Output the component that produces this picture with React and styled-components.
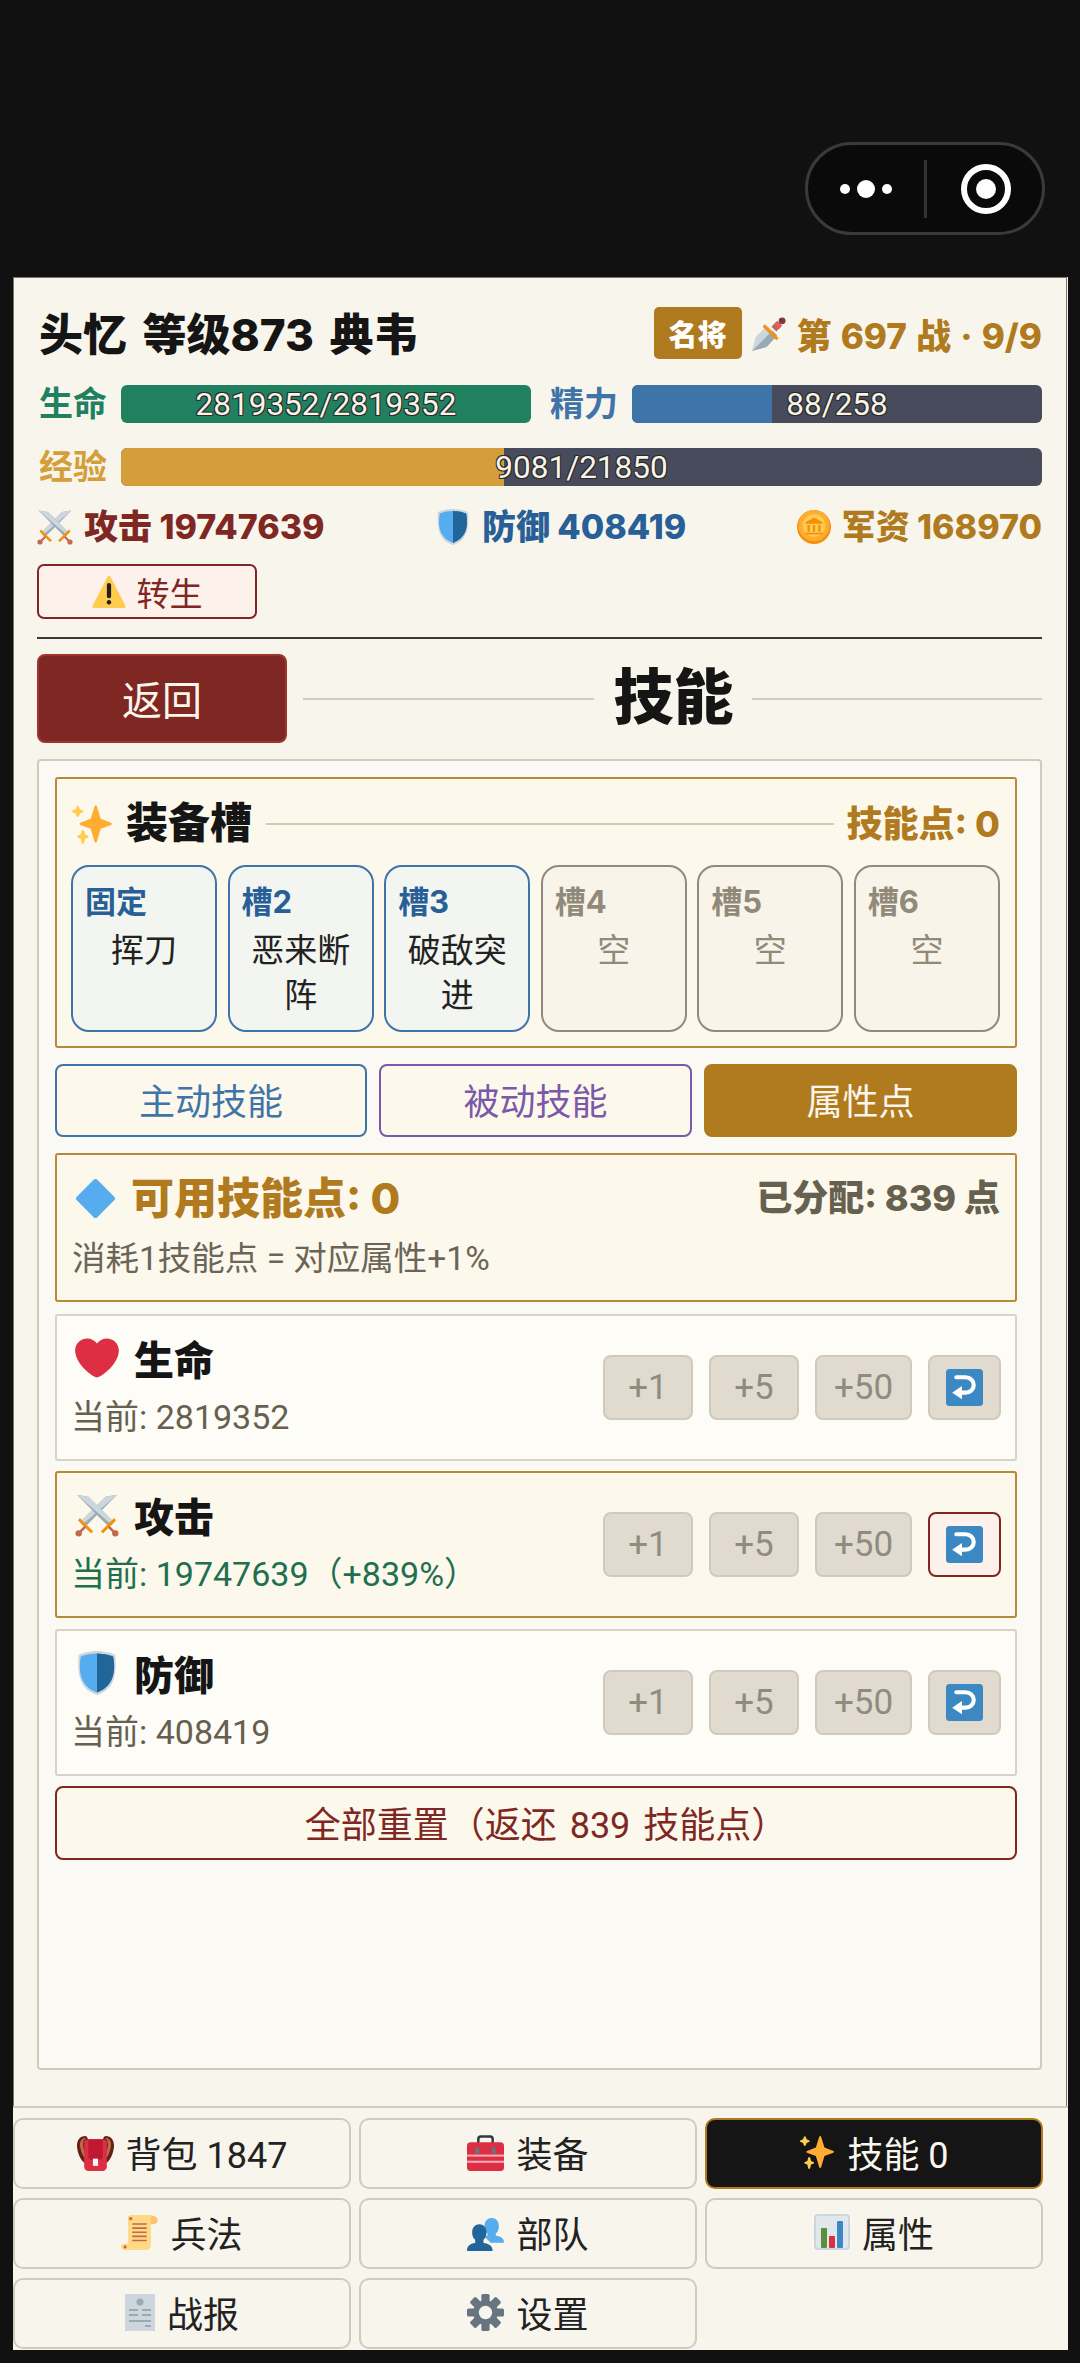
import React from "react";
import styled, { createGlobalStyle } from "styled-components";

const FONT = `Roboto, "Noto Sans CJK SC", sans-serif`;
const BOLD_FONT = `Inter, "Noto Sans CJK SC", sans-serif`;
const GOLD = "#b07a1e";
const RED = "#7f2723";
const BLUE = "#3f74a8";
const DEEP_BLUE = "#275f96";
const GREEN = "#20805f";
const LINE = "#cfcbbd";

const GlobalStyle = createGlobalStyle`
  html, body { margin: 0; padding: 0; background: #111; }
  * { box-sizing: border-box; }
  body { font-family: ${FONT}; }
`;

const Screen = styled.div`
  width: 1080px;
  height: 2363px;
  background: #111;
  overflow: hidden;
`;

// wechat style title bar
const TopBar = styled.div`
  height: 277px;
  padding: 142px 35px 0 0;
  display: flex;
  justify-content: flex-end;
`;
const Capsule = styled.div`
  width: 240px;
  height: 93px;
  border: 3px solid #3a3a3a;
  border-radius: 47px;
  background: #0a0a0a;
  display: flex;
  align-items: center;
`;
const CapsulePart = styled.div`
  flex: 1;
  display: flex;
  align-items: center;
  justify-content: center;
  gap: 7px;
`;
const Dot = styled.span`
  width: ${(p) => (p.$big ? 18 : 10)}px;
  height: ${(p) => (p.$big ? 18 : 10)}px;
  border-radius: 50%;
  background: #fff;
`;
const CapsuleDivider = styled.div`
  width: 3px;
  height: 58px;
  background: #333;
`;
const Record = styled.div`
  width: 50px;
  height: 50px;
  margin-left: 3px;
  border: 6px solid #fff;
  border-radius: 50%;
  display: flex;
  align-items: center;
  justify-content: center;
  &::after {
    content: "";
    width: 20px;
    height: 20px;
    border-radius: 50%;
    background: #fff;
  }
`;

const Panel = styled.div`
  margin-left: 13px;
  width: 1055px;
  height: 2073px;
  background: #f8f5ec;
  overflow: hidden;
  display: flex;
  flex-direction: column;
`;
const Main = styled.div`
  width: 1054px;
  height: 1830px;
  flex: none;
  padding: 30px 24px 0 23px;
  border-left: 1px solid #77756a;
  border-right: 1px solid #77756a;
  border-top: 1px solid #77756a;
`;

const HeadRow = styled.div`
  height: 52px;
  margin-top: -1px;
  display: flex;
  align-items: center;
`;
const PlayerName = styled.div`
  flex: 1;
  padding: 0 0 3px 2px;
  font-family: ${BOLD_FONT};
  font-size: 44px;
  font-weight: 800;
  word-spacing: 6px;
  color: #151515;
  white-space: nowrap;
`;
const RankBadge = styled.div`
  width: 88px;
  height: 52px;
  border-radius: 5px;
  background: ${GOLD};
  color: #fff;
  font-size: 29px;
  font-weight: 900;
  display: flex;
  align-items: center;
  justify-content: center;
`;
const BattleText = styled.div`
  margin-left: 10px;
  display: flex;
  align-items: center;
  gap: 10px;
  font-family: ${BOLD_FONT};
  font-size: 35px;
  font-weight: 800;
  word-spacing: 1.5px;
  color: ${GOLD};
  white-space: pre;
`;

const BarRow = styled.div`
  margin-top: ${(p) => p.$top}px;
  display: flex;
  gap: 17px;
`;
const BarGroup = styled.div`
  flex: 1;
  display: flex;
  align-items: center;
  gap: 12px;
`;
const BarLabel = styled.span`
  flex: none;
  width: 72px;
  padding-left: 2px;
  font-size: 34px;
  line-height: 38px;
  font-weight: 700;
  color: ${(p) => p.$color};
  white-space: nowrap;
`;
const Track = styled.div`
  position: relative;
  flex: 1;
  height: 38px;
  border-radius: 6px;
  background: #474b5b;
  overflow: hidden;
`;
const Fill = styled.div`
  height: 100%;
  background: ${(p) => p.$color};
`;
const BarText = styled.div`
  position: absolute;
  inset: 0;
  display: flex;
  align-items: center;
  justify-content: center;
  font-size: 31.5px;
  color: #f8f4e8;
  text-shadow: -1px -1px 0 #2a2a2a, 1px -1px 0 #2a2a2a, -1px 1px 0 #2a2a2a, 1px 1px 0 #2a2a2a;
`;

const StatRow = styled.div`
  margin-top: 21px;
  height: 40px;
  display: flex;
  align-items: center;
  justify-content: space-between;
`;
const Stat = styled.div`
  display: flex;
  align-items: center;
  gap: 11px;
  font-family: ${BOLD_FONT};
  font-size: 34px;
  line-height: 40px;
  font-weight: 800;
  color: ${(p) => p.$color};
  white-space: nowrap;
`;
const RebirthButton = styled.div`
  margin-top: 17px;
  width: 220px;
  height: 55px;
  border: 2px solid ${RED};
  border-radius: 7px;
  background: #fdf1eb;
  color: ${RED};
  font-size: 33px;
  display: flex;
  align-items: center;
  justify-content: center;
  gap: 11px;
`;
const Divider = styled.div`
  margin-top: 18px;
  height: 2px;
  background: #3b3a2c;
`;

const TitleRow = styled.div`
  margin-top: 15px;
  display: flex;
  align-items: center;
`;
const BackButton = styled.div`
  flex: none;
  width: 250px;
  height: 89px;
  margin-right: 16px;
  padding-bottom: 2px;
  border: 2px solid #a0352f;
  border-radius: 8px;
  background: ${RED};
  color: #fbf5ea;
  font-size: 40px;
  display: flex;
  align-items: center;
  justify-content: center;
`;
const TitleLine = styled.div`
  flex: 1;
  height: 2px;
  background: ${LINE};
`;
const PageTitle = styled.div`
  margin: 0 18px 0 20px;
  font-size: 60px;
  font-weight: 900;
  color: #151515;
  line-height: 1;
`;

const Box = styled.div`
  margin-top: 16px;
  height: 1311px;
  padding: 16px 23px 0 16px;
  border: 2px solid ${LINE};
  border-radius: 4px;
  background: #fbf9f3;
  display: flex;
  flex-direction: column;
  gap: 16px;
`;
const SlotSection = styled.div`
  height: 271px;
  flex: none;
  padding: 23px 15px 0 14px;
  border: 2px solid #b58a3a;
  border-radius: 3px;
  background: #fdf8ec;
`;
const SlotHead = styled.div`
  height: 44px;
  display: flex;
  align-items: center;
`;
const SlotTitle = styled.div`
  margin-left: 13px;
  font-size: 42px;
  line-height: 44px;
  font-weight: 900;
  color: #151515;
`;
const SlotLine = styled.div`
  flex: 1;
  height: 2px;
  margin: 0 13px 0 14px;
  background: #d0c9b4;
`;
const SlotPoints = styled.div`
  font-family: ${BOLD_FONT};
  font-size: 36px;
  line-height: 44px;
  font-weight: 800;
  color: ${GOLD};
  white-space: nowrap;
`;
const SlotGrid = styled.div`
  margin-top: 19px;
  display: grid;
  grid-template-columns: repeat(6, 1fr);
  column-gap: 10.4px;
`;
const Slot = styled.div`
  height: 167px;
  padding: 15px 12px 0;
  border: 2px solid ${(p) => (p.$empty ? "#918a7b" : BLUE)};
  border-radius: 18px;
  background: ${(p) => (p.$empty ? "#f8f4ea" : "#f3f5f0")};
`;
const SlotLabel = styled.div`
  font-family: ${BOLD_FONT};
  font-size: 31px;
  line-height: 40px;
  font-weight: 700;
  color: ${(p) => (p.$empty ? "#918a7b" : DEEP_BLUE)};
`;
const SlotName = styled.div`
  margin-top: 6px;
  font-size: 33px;
  line-height: 45px;
  text-align: center;
  color: ${(p) => (p.$empty ? "#918a7b" : "#222")};
`;

const TabRow = styled.div`
  display: grid;
  grid-template-columns: 312px 313px 1fr;
  gap: 12px;
`;
const Tab = styled.div`
  height: 73px;
  padding-bottom: 3px;
  border: 2px solid ${(p) => p.$color};
  border-radius: 8px;
  background: ${(p) => (p.$active ? p.$color : "#fdf8ec")};
  color: ${(p) => (p.$active ? "#fbf5ea" : p.$color)};
  font-size: 36px;
  display: flex;
  align-items: center;
  justify-content: center;
`;

const Stack = styled.div`
  display: flex;
  flex-direction: column;
  gap: 10.5px;
`;
const PointsCard = styled.div`
  height: 149px;
  margin-bottom: 1px;
  padding: 18px 15px 0 18px;
  border: 2px solid #b58a3a;
  border-radius: 3px;
  background: #fdf8ec;
`;
const PointsHead = styled.div`
  height: 50px;
  display: flex;
  align-items: center;
`;
const PointsMain = styled.div`
  flex: 1;
  margin-left: 15px;
  font-family: ${BOLD_FONT};
  font-size: 43px;
  line-height: 50px;
  font-weight: 800;
  color: ${GOLD};
`;
const PointsUsed = styled.div`
  font-family: ${BOLD_FONT};
  font-size: 36px;
  line-height: 50px;
  font-weight: 800;
  color: #66604f;
  white-space: pre;
`;
const PointsNote = styled.div`
  margin: 14px 0 0 -3px;
  font-size: 33.5px;
  line-height: 44px;
  color: #6b6557;
`;

const AttrRow = styled.div`
  height: 147px;
  padding: 0 14px 0 16px;
  border: 2px solid ${(p) => (p.$active ? "#b58a3a" : "#d7d3c6")};
  border-radius: 3px;
  background: ${(p) => (p.$active ? "#fdf8ec" : "#fdfcf7")};
  display: flex;
  align-items: center;
`;
const AttrInfo = styled.div`
  flex: 1;
`;
const AttrName = styled.div`
  height: 44px;
  display: flex;
  align-items: center;
  gap: 15px;
  padding-left: 2px;
  font-size: 40px;
  font-weight: 900;
  color: #151515;
`;
const AttrValue = styled.div`
  margin: 15px 0 0 -2px;
  font-size: 34px;
  line-height: 44px;
  color: ${(p) => (p.$active ? "#20704f" : "#66604f")};
  white-space: nowrap;
`;
const StepGroup = styled.div`
  display: flex;
  gap: 16px;
`;
const StepButton = styled.div`
  width: ${(p) => p.$width}px;
  height: 65px;
  border: 2px solid #cfcabb;
  border-radius: 8px;
  background: #e0dbce;
  color: #8f8b7e;
  font-size: 35px;
  display: flex;
  align-items: center;
  justify-content: center;
`;
const UndoButton = styled(StepButton)`
  border-color: ${(p) => (p.$active ? RED : "#cfcabb")};
  background: ${(p) => (p.$active ? "#fdf1eb" : "#e0dbce")};
`;
const ResetAll = styled.div`
  height: 74px;
  padding: 0 0 3px 20px;
  border: 2px solid ${RED};
  border-radius: 8px;
  background: #fdf8ec;
  color: ${RED};
  font-size: 36px;
  word-spacing: 4px;
  display: flex;
  align-items: center;
  justify-content: center;
`;

const Nav = styled.div`
  flex: 1;
  padding: 10px 25px 0 0;
  border-top: 2px solid ${LINE};
  margin-top: -1px;
  display: grid;
  grid-template-columns: repeat(3, 1fr);
  grid-auto-rows: 71px;
  gap: 9px 8px;
`;
const NavButton = styled.div`
  padding-bottom: 3px;
  border: 2px solid ${(p) => (p.$active ? GOLD : LINE)};
  border-radius: 10px;
  background: ${(p) => (p.$active ? "#151515" : "#f8f5ec")};
  color: ${(p) => (p.$active ? "#fbf7ee" : "#222")};
  font-size: 36px;
  display: flex;
  align-items: center;
  justify-content: center;
  gap: 12px;
  white-space: nowrap;
`;

const Icon = styled.svg`
  flex: none;
  display: block;
`;

const Sparkles = ({ size = 42 }) => (
  <Icon width={size} height={size} viewBox="0 0 36 36">
    <path fill="#FFAC33" d="M34.347 16.893l-8.899-3.294-3.323-10.891c-.128-.42-.517-.708-.956-.708-.439 0-.828.288-.956.708l-3.322 10.891-8.9 3.294c-.393.146-.653.519-.653.938 0 .418.26.793.653.938l8.895 3.293 3.324 11.223c.126.424.516.715.959.715.442 0 .833-.291.959-.716l3.324-11.223 8.896-3.293c.391-.144.652-.518.652-.937 0-.418-.261-.792-.653-.938z" />
    <path fill="#FFCC4D" d="M14.347 27.894l-2.314-.856-.9-3.3c-.118-.436-.513-.738-.964-.738-.451 0-.846.302-.965.737l-.9 3.3-2.313.856c-.393.145-.653.52-.653.938 0 .418.26.793.653.938l2.301.853.907 3.622c.112.444.511.756.97.756.459 0 .858-.312.97-.757l.907-3.622 2.301-.853c.393-.144.653-.519.653-.937 0-.418-.26-.793-.653-.937z" />
    <path fill="#FFCC4D" d="M10.009 6.231l-2.364-.875-.876-2.365c-.145-.393-.519-.653-.938-.653-.418 0-.792.26-.938.653l-.875 2.365-2.365.875c-.393.146-.653.52-.653.938 0 .418.26.793.653.938l2.365.875.875 2.365c.146.393.52.653.938.653.418 0 .793-.26.938-.653l.875-2.365 2.365-.875c.393-.146.653-.52.653-.938 0-.418-.26-.792-.653-.938z" />
  </Icon>
);

const Heart = ({ size = 44 }) => (
  <Icon width={size} height={size} viewBox="0 0 36 36">
    <path fill="#DD2E44" d="M35.885 11.833c0-5.45-4.418-9.868-9.867-9.868-3.308 0-6.227 1.633-8.018 4.129-1.791-2.496-4.71-4.129-8.017-4.129-5.45 0-9.868 4.417-9.868 9.868 0 .772.098 1.52.266 2.241C1.751 22.587 11.216 31.568 18 34.034c6.783-2.466 16.249-11.447 17.617-19.959.17-.721.268-1.469.268-2.242z" />
  </Icon>
);

const Swords = ({ size = 36 }) => (
  <Icon width={size} height={size} viewBox="0 0 36 36">
    <path fill="#99AAB5" d="M34.5 1.5L25 3 4 24l4 4 21-21z" />
    <path fill="#CCD6DD" d="M34.5 1.5L25 3 4 24l2 2z" />
    <path fill="#99AAB5" d="M1.5 1.5L11 3l21 21-4 4L7 7z" />
    <path fill="#CCD6DD" d="M1.5 1.5L11 3l21 21-2 2z" />
    <path fill="#F4900C" d="M4 20.5l11 11-2 1.5L2.5 22.5zM32 20.5L21 31.5l2 1.5 10.5-10.5z" />
    <path fill="#C1694F" d="M7.5 27L3 31.5l1.5 1.5L9 28.5zM28.5 27L33 31.5 31.5 33 27 28.5z" />
    <circle cx="3" cy="33" r="2.6" fill="#C1694F" />
    <circle cx="33" cy="33" r="2.6" fill="#C1694F" />
  </Icon>
);

const Shield = ({ size = 36 }) => (
  <Icon width={size} height={size} viewBox="0 0 36 36">
    <path fill="#CCD6DD" d="M33 3c-7-3-15-3-15-3S10 0 3 3C2 18 3 31 18 36c15-5 16-18 15-33z" />
    <path fill="#55ACEE" d="M18 33.884C6.412 29.729 1.961 19.831 4.76 4.444 11.063 2.029 17.928 2 18 2c.071 0 6.958.04 13.24 2.444 2.799 15.387-1.652 25.285-13.24 29.44z" />
    <path fill="#226699" d="M31.24 4.444C24.958 2.04 18.071 2 18 2v31.884c11.588-4.155 16.039-14.053 13.24-29.44z" />
  </Icon>
);

const Coin = ({ size = 34 }) => (
  <Icon width={size} height={size} viewBox="0 0 36 36">
    <circle cx="18" cy="18" r="18" fill="#F4900C" />
    <circle cx="18" cy="16.5" r="16.5" fill="#FFAC33" />
    <circle cx="18" cy="16.5" r="12" fill="#FFCC4D" />
    <path fill="#F4900C" d="M18 8l9 5v1.5H9V13zM11 16h2.5v7H11zM16.8 16h2.4v7h-2.4zM22.5 16H25v7h-2.5zM9 24h18v2H9z" />
  </Icon>
);

const Warning = ({ size = 34 }) => (
  <Icon width={size} height={size} viewBox="0 0 36 36">
    <path fill="#FFCC4D" d="M2.653 35C.811 35-.001 33.662.847 32.027L16.456 1.972c.849-1.635 2.238-1.635 3.087 0l15.609 30.056c.85 1.634.037 2.972-1.805 2.972H2.653z" />
    <path fill="#231F20" d="M15.583 28.953c0-1.333 1.085-2.418 2.419-2.418 1.333 0 2.418 1.085 2.418 2.418 0 1.334-1.086 2.419-2.418 2.419-1.334 0-2.419-1.085-2.419-2.419zm.186-18.293c0-1.302.961-2.108 2.232-2.108 1.241 0 2.233.837 2.233 2.108v11.938c0 1.271-.992 2.108-2.233 2.108-1.271 0-2.232-.807-2.232-2.108V10.66z" />
  </Icon>
);

const Dagger = ({ size = 35 }) => (
  <Icon width={size} height={size} viewBox="0 0 36 36">
    <path fill="#CCD6DD" d="M0 36L4 21 16 10l10 10-11 12z" />
    <path fill="#99AAB5" d="M0 36L21 15l5 5-11 12z" />
    <path fill="#F4900C" d="M13 8.5l14.5 14.5-2.5 2L11 11z" />
    <path fill="#C1694F" d="M20 11l6-6 5 5-6 6z" />
    <path fill="#EA596E" d="M23 8l2-2 5 5-2 2z" />
    <circle cx="31" cy="5" r="3.5" fill="#7C3A3A" />
  </Icon>
);

const Diamond = ({ size = 41 }) => (
  <Icon width={size} height={size} viewBox="0 0 36 36">
    <path fill="#55ACEE" d="M16.6 1.4c.8-.8 2-.8 2.8 0l15.2 15.2c.8.8.8 2 0 2.8L19.4 34.6c-.8.8-2 .8-2.8 0L1.4 19.4c-.8-.8-.8-2 0-2.8z" />
  </Icon>
);

const UndoIcon = () => (
  <Icon width={37} height={37} viewBox="0 0 36 36">
    <rect width="36" height="36" rx="3.5" fill="#3B88C3" />
    <path fill="none" stroke="#fff" strokeWidth="4" strokeLinecap="round" d="M10 8h9c4.5 0 8 3.2 8 7.5S23.5 23 19 23h-6" />
    <path fill="#fff" d="M15.5 16.5v13L6 23z" />
  </Icon>
);

const Backpack = ({ size = 37 }) => (
  <Icon width={size} height={size} viewBox="0 0 36 36">
    <path fill="#662113" d="M8 2C3 2 0 6 0 11c0 6 3 14 7 17h4V8c0-3-1-6-3-6zM28 2c5 0 8 4 8 9 0 6-3 14-7 17h-4V8c0-3 1-6 3-6z" />
    <path fill="#C1694F" d="M7 4C4 5 2.5 8 3 12c.5 4 2 8 4 11l2-1C7 18 6 13 6 10c0-3 1-5 3-6zM29 4c3 1 4.5 4 4 8-.5 4-2 8-4 11l-2-1c2-4 3-9 3-12 0-3-1-5-3-6z" />
    <path fill="#DD2E44" d="M7 8c0-2 2-3 4-3h14c2 0 4 1 4 3v24c0 2-2 4-4 4H11c-2 0-4-2-4-4z" />
    <path fill="#BE1931" d="M11 5h14v17c0 2-1 3-3 3h-8c-2 0-3-1-3-3z" />
    <rect x="15.5" y="24" width="5" height="7" fill="#F5F8FA" />
  </Icon>
);

const Toolbox = ({ size = 37 }) => (
  <Icon width={size} height={size} viewBox="0 0 36 36">
    <path fill="none" stroke="#31373D" strokeWidth="2.4" d="M11 10V5c0-1.5 1-2.5 2.5-2.5h9C24 2.5 25 3.5 25 5v5" />
    <rect y="8" width="36" height="28" rx="3.5" fill="#DD2E44" />
    <rect y="20" width="36" height="2" fill="#F4ABBA" />
    <rect y="26" width="36" height="2" fill="#F4ABBA" />
    <rect x="8" y="13" width="4" height="6" rx="1" fill="#66757F" />
    <rect x="24" y="13" width="4" height="6" rx="1" fill="#66757F" />
  </Icon>
);

const Scroll = ({ size = 37 }) => (
  <Icon width={size} height={size} viewBox="0 0 36 36">
    <path fill="#FFAC33" d="M7 2h24c2.5 0 4.5 1.5 4.5 4s-2 4-4.5 4H7z" opacity="0.7" />
    <path fill="#FFD983" d="M7 4c0-2 1-3 3-3h22c-2 0-3 2-3 4v26c0 2-2 4-4 4H3c2 0 4-2 4-4z" />
    <path fill="#FFD983" d="M4 29h20v2c0 2-1 4-3 4H4c-2 0-4-1.5-4-3s2-3 4-3z" />
    <circle cx="9.5" cy="4.5" r="1.5" fill="#C1694F" />
    <circle cx="4" cy="32" r="1.5" fill="#C1694F" />
    <path fill="#C1694F" d="M11 9h14v1.5H11zM11 13h14v1.5H11zM11 17h14v1.5H11zM11 21h14v1.5H11zM11 25h14v1.5H11z" />
  </Icon>
);

const Users = ({ size = 37 }) => (
  <Icon width={size} height={size} viewBox="0 0 36 36">
    <path fill="#55ACEE" d="M36 28c0-5-4-6-8-7v-2c2-1 3-4 3-7 0-5-3-8-7-8s-7 3-7 8c0 3 1 6 3 7v2c-1 .3-2 .6-3 1l6 6z" />
    <path fill="#226699" d="M25 36c0-6-5-7-9-8v-3c2-1 3-4 3-7 0-5-3-8-7-8s-7 3-7 8c0 3 1 6 3 7v3c-4 1-8 2-8 8z" />
  </Icon>
);

const BarChart = ({ size = 36 }) => (
  <Icon width={size} height={size} viewBox="0 0 36 36">
    <rect width="36" height="36" rx="4" fill="#CCD6DD" />
    <rect x="2" y="2" width="32" height="32" rx="2" fill="#E1E8ED" />
    <rect x="7" y="14" width="6" height="20" rx="1" fill="#5C913B" />
    <rect x="15" y="22" width="6" height="12" rx="1" fill="#DD2E44" />
    <rect x="23" y="7" width="6" height="27" rx="1" fill="#3B88C3" />
  </Icon>
);

const Receipt = ({ width = 30, height = 37 }) => (
  <Icon width={width} height={height} viewBox="0 0 30 37">
    <path fill="#CCD6DD" d="M0 0h30v37H0z" />
    <circle cx="15" cy="8" r="3.5" fill="#99AAB5" />
    <path fill="#99AAB5" d="M4 15h9v2H4zM17 15h9v2h-9zM4 20h9v2H4zM17 20h9v2h-9zM4 26h22v2H4zM20 31h6v2h-6z" />
  </Icon>
);

const Gear = ({ size = 37 }) => (
  <Icon width={size} height={size} viewBox="0 0 36 36">
    {[0, 45, 90, 135].map((deg) => (
      <rect key={deg} x="14" y="0" width="8" height="36" rx="1.5" fill="#66757F" transform={`rotate(${deg} 18 18)`} />
    ))}
    <circle cx="18" cy="18" r="8.5" fill="none" stroke="#66757F" strokeWidth="7" />
    <circle cx="18" cy="18" r="6.5" fill="#f8f5ec" />
  </Icon>
);

const SLOTS = [
  { label: "固定", name: "挥刀" },
  { label: "槽2", name: "恶来断阵" },
  { label: "槽3", name: "破敌突进" },
  { label: "槽4", name: "空", empty: true },
  { label: "槽5", name: "空", empty: true },
  { label: "槽6", name: "空", empty: true },
];

const ATTRS = [
  { name: "生命", icon: <Heart />, value: "当前: 2819352" },
  { name: "攻击", icon: <Swords size={44} />, value: "当前: 19747639（+839%）", active: true },
  { name: "防御", icon: <Shield size={44} />, value: "当前: 408419" },
];

const NAV = [
  { icon: <Backpack />, text: "背包 1847" },
  { icon: <Toolbox />, text: "装备" },
  { icon: <Sparkles size={36} />, text: "技能 0", active: true },
  { icon: <Scroll />, text: "兵法" },
  { icon: <Users />, text: "部队" },
  { icon: <BarChart />, text: "属性" },
  { icon: <Receipt />, text: "战报" },
  { icon: <Gear />, text: "设置" },
];

export default function App() {
  return (
    <Screen>
      <GlobalStyle />
      <TopBar>
        <Capsule>
          <CapsulePart>
            <Dot />
            <Dot $big />
            <Dot />
          </CapsulePart>
          <CapsuleDivider />
          <CapsulePart>
            <Record />
          </CapsulePart>
        </Capsule>
      </TopBar>
      <Panel>
        <Main>
          <HeadRow>
            <PlayerName>头忆 等级873 典韦</PlayerName>
            <RankBadge>名将</RankBadge>
            <BattleText>
              <Dagger />
              第 697 战 · 9/9
            </BattleText>
          </HeadRow>
          <BarRow $top={26}>
            <BarGroup>
              <BarLabel $color={GREEN}>生命</BarLabel>
              <Track>
                <Fill $color={GREEN} style={{ width: "100%" }} />
                <BarText>2819352/2819352</BarText>
              </Track>
            </BarGroup>
            <BarGroup>
              <BarLabel $color={BLUE}>精力</BarLabel>
              <Track>
                <Fill $color={BLUE} style={{ width: `${(88 / 258) * 100}%` }} />
                <BarText>88/258</BarText>
              </Track>
            </BarGroup>
          </BarRow>
          <BarRow $top={25}>
            <BarGroup>
              <BarLabel $color="#d49f3a">经验</BarLabel>
              <Track>
                <Fill $color="#d49f3a" style={{ width: `${(9081 / 21850) * 100}%` }} />
                <BarText>9081/21850</BarText>
              </Track>
            </BarGroup>
          </BarRow>
          <StatRow>
            <Stat $color={RED}>
              <Swords />
              攻击 19747639
            </Stat>
            <Stat $color={DEEP_BLUE}>
              <Shield />
              防御 408419
            </Stat>
            <Stat $color={GOLD}>
              <Coin />
              军资 168970
            </Stat>
          </StatRow>
          <RebirthButton>
            <Warning />
            转生
          </RebirthButton>
          <Divider />
          <TitleRow>
            <BackButton>返回</BackButton>
            <TitleLine />
            <PageTitle>技能</PageTitle>
            <TitleLine />
          </TitleRow>
          <Box>
            <SlotSection>
              <SlotHead>
                <Sparkles />
                <SlotTitle>装备槽</SlotTitle>
                <SlotLine />
                <SlotPoints>技能点: 0</SlotPoints>
              </SlotHead>
              <SlotGrid>
                {SLOTS.map((slot) => (
                  <Slot key={slot.label} $empty={slot.empty}>
                    <SlotLabel $empty={slot.empty}>{slot.label}</SlotLabel>
                    <SlotName $empty={slot.empty}>{slot.name}</SlotName>
                  </Slot>
                ))}
              </SlotGrid>
            </SlotSection>
            <TabRow>
              <Tab $color={BLUE}>主动技能</Tab>
              <Tab $color="#7a59a8">被动技能</Tab>
              <Tab $color={GOLD} $active>
                属性点
              </Tab>
            </TabRow>
            <Stack>
              <PointsCard>
                <PointsHead>
                  <Diamond />
                  <PointsMain>可用技能点: 0</PointsMain>
                  <PointsUsed>已分配: 839 点</PointsUsed>
                </PointsHead>
                <PointsNote>消耗1技能点 = 对应属性+1%</PointsNote>
              </PointsCard>
              {ATTRS.map((attr) => (
                <AttrRow key={attr.name} $active={attr.active}>
                  <AttrInfo>
                    <AttrName>
                      {attr.icon}
                      {attr.name}
                    </AttrName>
                    <AttrValue $active={attr.active}>{attr.value}</AttrValue>
                  </AttrInfo>
                  <StepGroup>
                    <StepButton $width={90}>+1</StepButton>
                    <StepButton $width={90}>+5</StepButton>
                    <StepButton $width={97}>+50</StepButton>
                    <UndoButton $width={73} $active={attr.active}>
                      <UndoIcon />
                    </UndoButton>
                  </StepGroup>
                </AttrRow>
              ))}
              <ResetAll>全部重置（返还 839 技能点）</ResetAll>
            </Stack>
          </Box>
        </Main>
        <Nav>
          {NAV.map((item) => (
            <NavButton key={item.text} $active={item.active}>
              {item.icon}
              {item.text}
            </NavButton>
          ))}
        </Nav>
      </Panel>
    </Screen>
  );
}
